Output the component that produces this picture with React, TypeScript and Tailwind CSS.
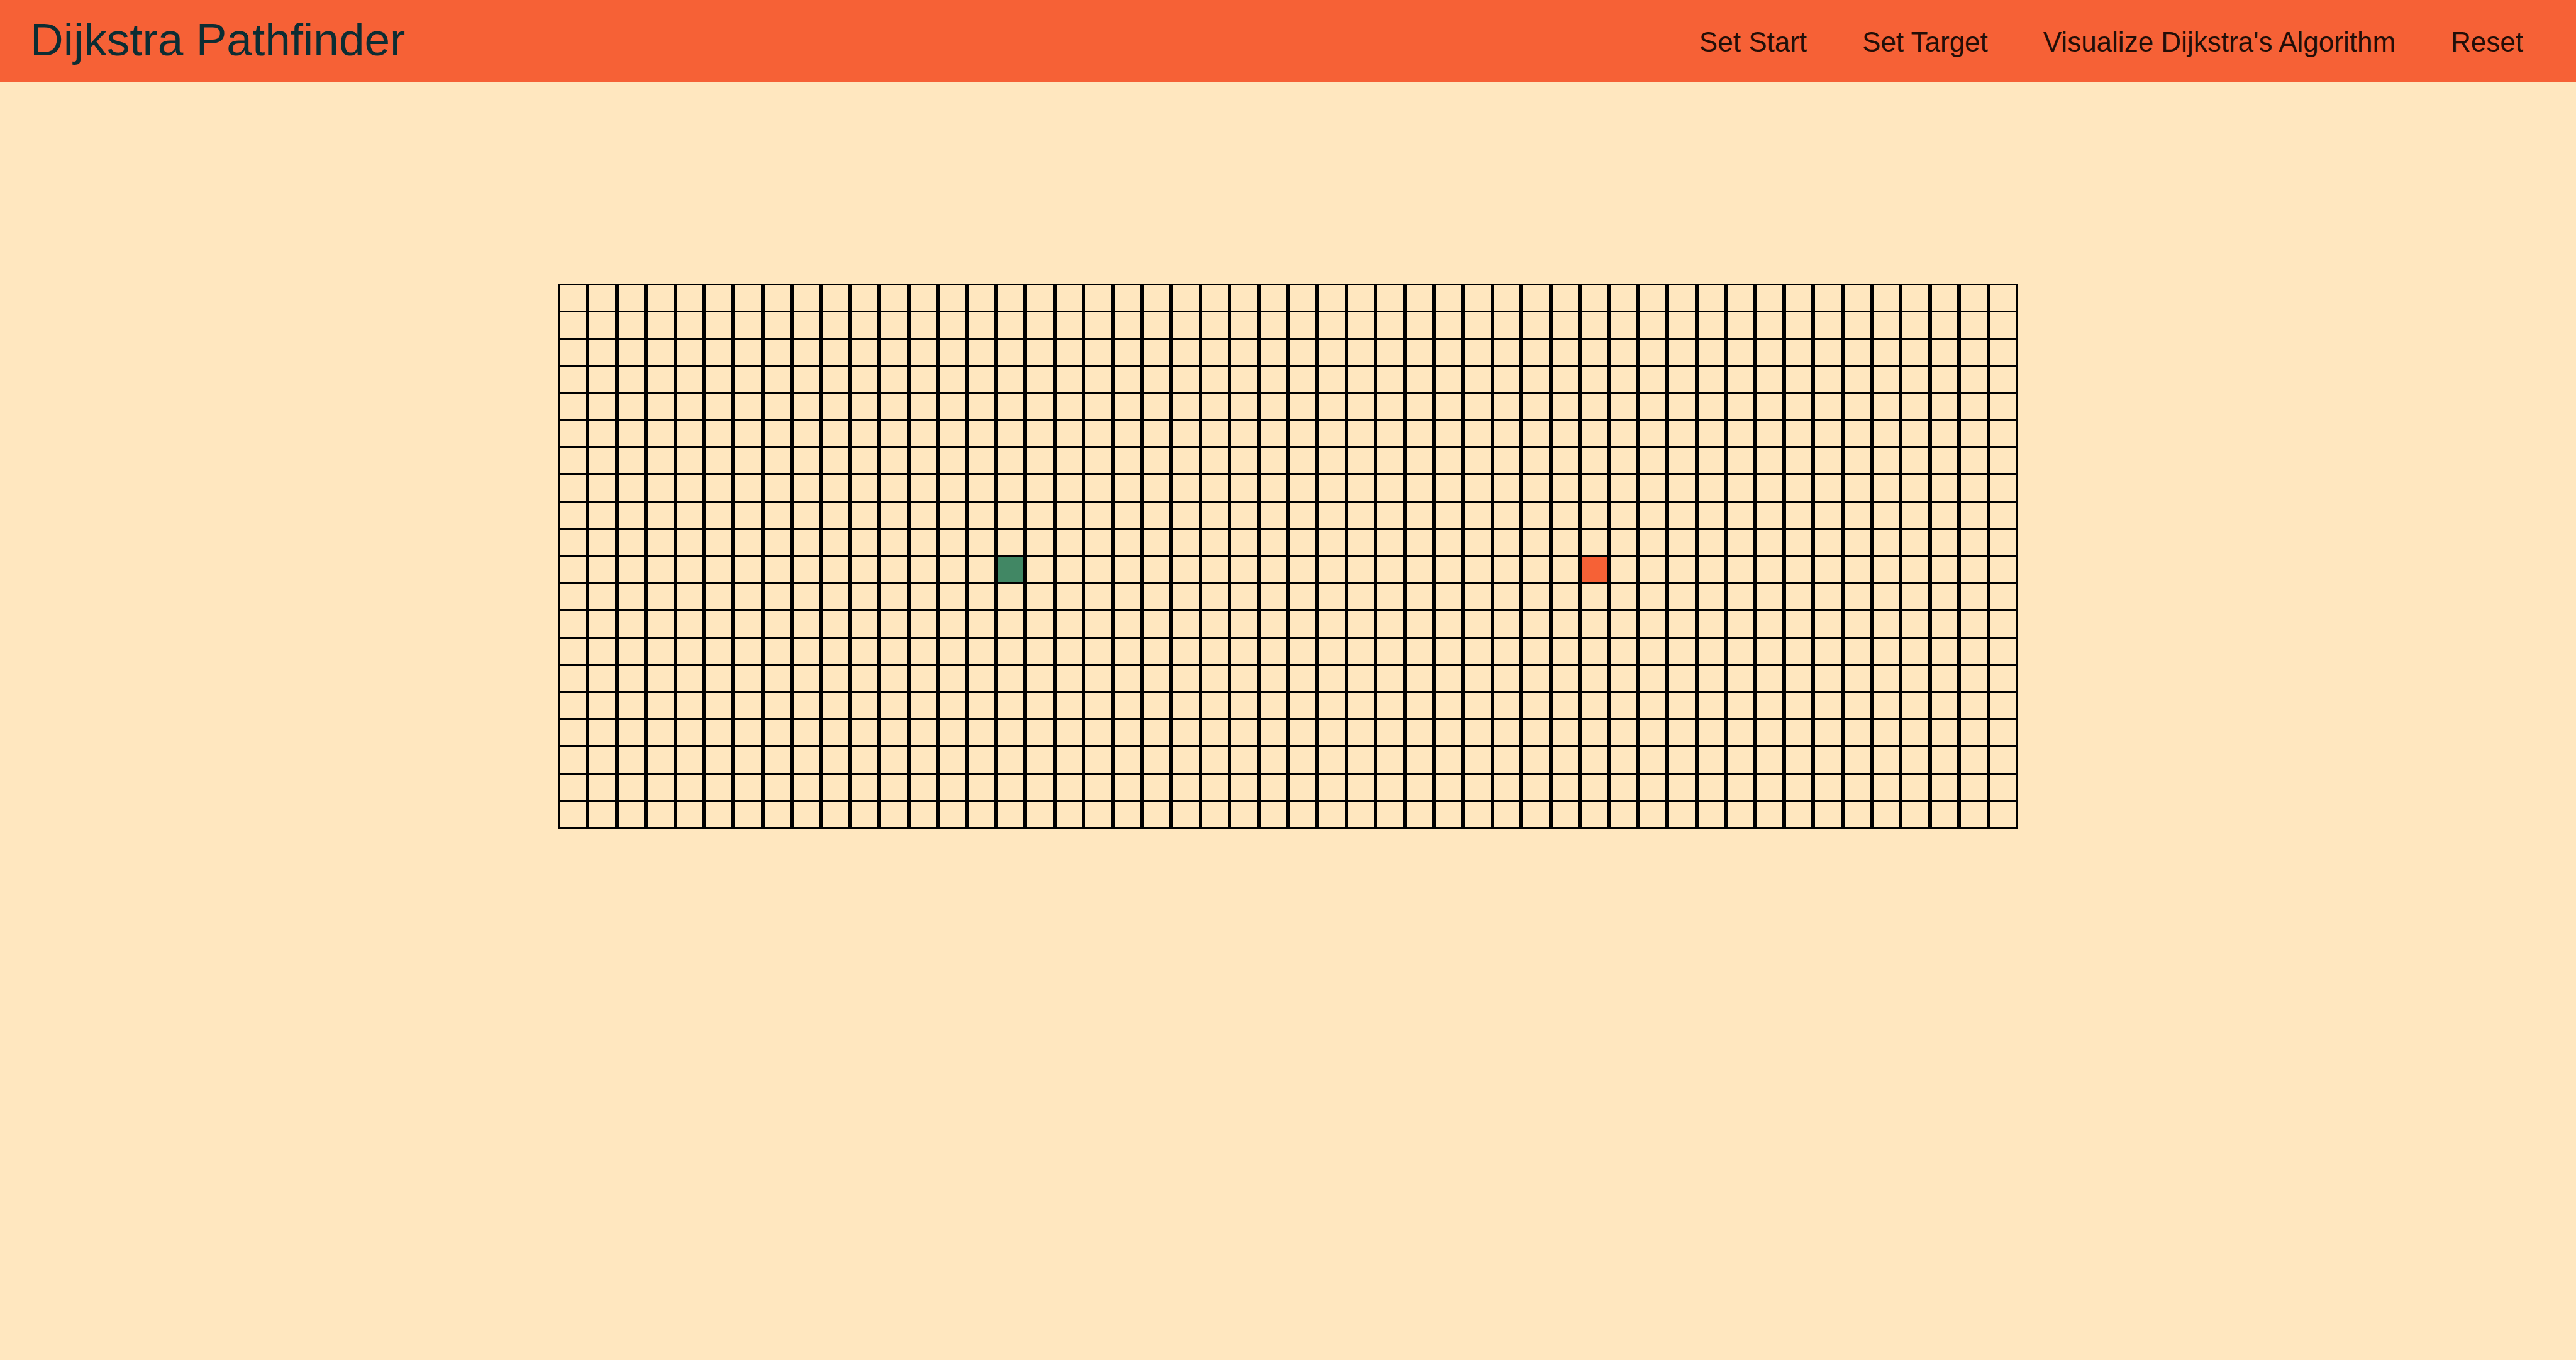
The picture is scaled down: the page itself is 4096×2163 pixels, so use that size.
const ROWS = 20;
const COLS = 50;
const START = { row: 10, col: 15 };
const TARGET = { row: 10, col: 35 };

const ACTIONS = ["Set Start", "Set Target", "Visualize Dijkstra's Algorithm", "Reset"];

function Header() {
  return (
    <header className="flex h-[130px] items-center justify-between bg-[#f66136] pr-10 pl-12">
      <h1 className="pb-1 text-[73px] leading-[88px] text-[#0c2d33]">Dijkstra Pathfinder</h1>
      <nav className="flex text-[44px] leading-[54px] text-[#230e07]">
        {ACTIONS.map((label) => (
          <button key={label} type="button" className="cursor-pointer px-11 pt-1">
            {label}
          </button>
        ))}
      </nav>
    </header>
  );
}

function Cell({ row, col }: { row: number; col: number }) {
  const isStart = row === START.row && col === START.col;
  const isTarget = row === TARGET.row && col === TARGET.col;
  const fill = isStart ? "bg-[#418764]" : isTarget ? "bg-[#f66136]" : "bg-transparent";
  const kind = isStart ? "start, " : isTarget ? "target, " : "";
  return (
    <button
      type="button"
      aria-label={`${kind}row ${row + 1}, column ${col + 1}`}
      className={`border-x-[3px] border-t-[3px] border-black ${fill}`}
    />
  );
}

function Board() {
  const cells = Array.from({ length: ROWS * COLS }, (_, i) => ({
    row: Math.floor(i / COLS),
    col: i % COLS,
  }));
  return (
    <div className="mx-auto mt-[321px] grid h-[867px] w-[2320px] max-w-full grid-cols-[repeat(50,minmax(0,1fr))] grid-rows-[repeat(20,minmax(0,1fr))] border-b-[3px] border-black">
      {cells.map(({ row, col }) => (
        <Cell key={`${row}-${col}`} row={row} col={col} />
      ))}
    </div>
  );
}

export default function App() {
  return (
    <div className="min-h-screen bg-[#ffe7bf] font-['Liberation_Sans',Arial,sans-serif]">
      <Header />
      <main className="flow-root">
        <Board />
      </main>
    </div>
  );
}
